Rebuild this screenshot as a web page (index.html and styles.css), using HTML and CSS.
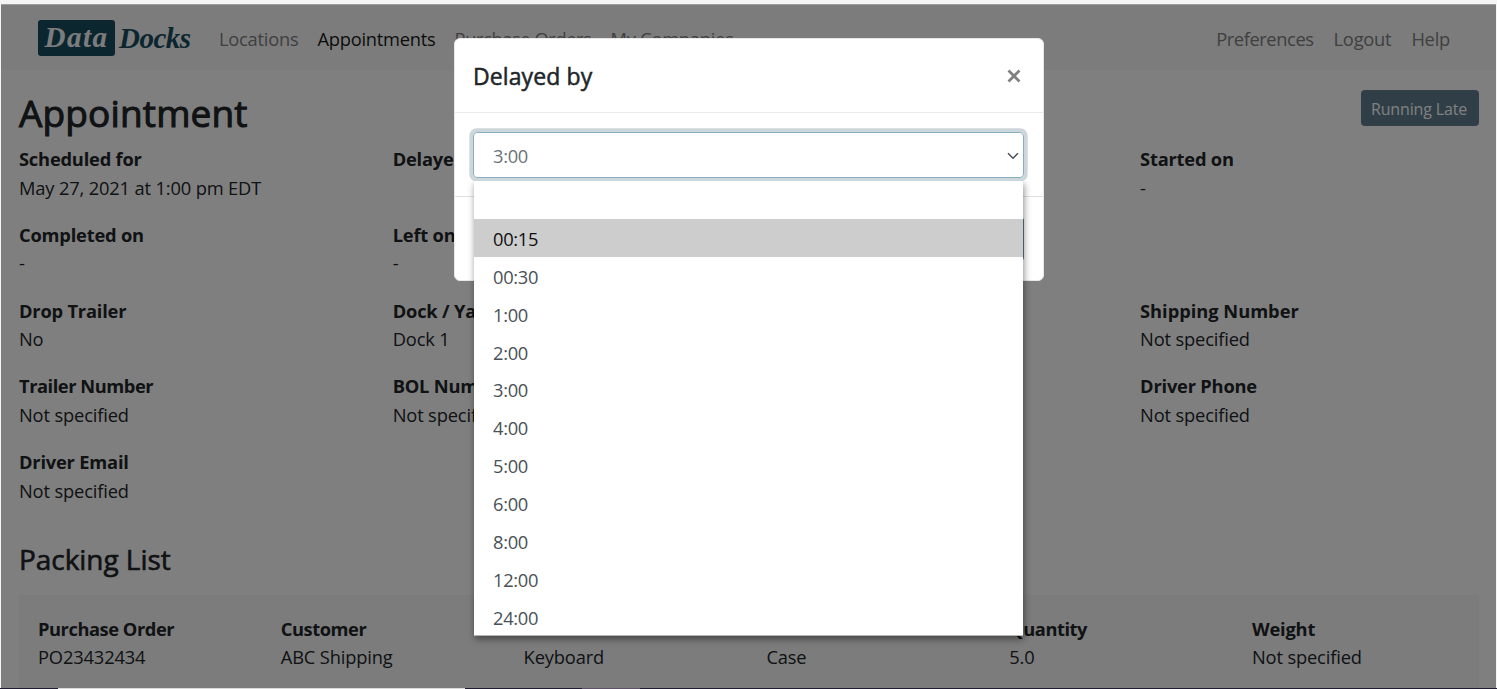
FILE: index.html
```html
<!DOCTYPE html>
<html lang="en">
<head>
<meta charset="utf-8">
<title>Appointment</title>
<link rel="stylesheet" href="styles.css">
</head>
<body>
<div class="page">
  <nav class="navbar">
    <div class="logo"><span class="logo-box">Data</span><span class="logo-rest">Docks</span></div>
    <div class="links">
      <a>Locations</a><a class="active">Appointments</a><a class="tight">Purchase Orders</a><a>My Companies</a>
    </div>
    <div class="links right"><a class="tight">Preferences</a><a>Logout</a><a>Help</a></div>
  </nav>
  <main class="content">
    <div class="title-row"><h1>Appointment</h1><button class="late">Running Late</button></div>
    <div class="details">
      <div class="field"><b>Scheduled for</b><span>May 27, 2021 at 1:00 pm EDT</span></div>
      <div class="field"><b>Delayed by</b></div>
      <div class="field"></div>
      <div class="field"><b>Started on</b><span>-</span></div>
      <div class="field"><b>Completed on</b><span>-</span></div>
      <div class="field"><b>Left on</b><span>-</span></div>
      <div class="field"></div>
      <div class="field"></div>
      <div class="field"><b>Drop Trailer</b><span>No</span></div>
      <div class="field"><b>Dock / Yard</b><span>Dock 1</span></div>
      <div class="field"></div>
      <div class="field"><b class="wide">Shipping Number</b><span>Not specified</span></div>
      <div class="field"><b class="tight">Trailer Number</b><span>Not specified</span></div>
      <div class="field"><b>BOL Number</b><span>Not specified</span></div>
      <div class="field"></div>
      <div class="field"><b>Driver Phone</b><span>Not specified</span></div>
      <div class="field"><b>Driver Email</b><span>Not specified</span></div>
    </div>
    <h2>Packing List</h2>
    <div class="packing">
      <div class="field"><b class="tight">Purchase Order</b><span>PO23432434</span></div>
      <div class="field"><b class="tight">Customer</b><span>ABC Shipping</span></div>
      <div class="field"><b>&nbsp;</b><span>Keyboard</span></div>
      <div class="field"><b>&nbsp;</b><span>Case</span></div>
      <div class="field"><b class="tight">Quantity</b><span>5.0</span></div>
      <div class="field"><b>Weight</b><span>Not specified</span></div>
    </div>
  </main>
  <div class="backdrop"></div>
</div>
<div class="taskbar"><i class="light"></i><i class="violet"></i></div>
<div class="modal">
  <div class="modal-head">
    <h5>Delayed by</h5>
    <svg class="close" width="14" height="14" viewBox="0 0 14 14"><path d="M1.5 1.5 12.5 12.5M12.5 1.5 1.5 12.5" stroke="#7f7f7f" stroke-width="2.7" fill="none"/></svg>
  </div>
  <div class="modal-body">
    <div class="select"><span>3:00</span><svg width="12" height="8" viewBox="0 0 12 8"><path d="M1 1.2 6 6.2 11 1.2" fill="none" stroke="#495057" stroke-width="1.5"/></svg>
      <div class="menu">
        <div></div><div class="hover">00:15</div><div>00:30</div><div>1:00</div><div>2:00</div><div>3:00</div><div>4:00</div><div>5:00</div><div>6:00</div><div>8:00</div><div>12:00</div><div>24:00</div>
      </div>
    </div>
  </div>
  <div class="modal-foot"><div class="save"></div></div>
</div>
</body>
</html>
```
FILE: styles.css
```css
* { box-sizing: border-box; }
body {
  margin: 0;
  height: 689px;
  padding: 4px 1px 0;
  overflow: hidden;
  background: #f5f5f5;
  color: #212529;
  font: 18.3px/28.5px "Open Sans", "Noto Sans", sans-serif;
  letter-spacing: -0.15px;
}
.page {
  position: relative;
  height: 684px;
  overflow: hidden;
  background: #fff;
}
.backdrop {
  position: absolute;
  inset: 0;
  background: rgba(0, 0, 0, 0.5);
  border-top: 1px solid rgba(255, 255, 255, 0.25);
}
.navbar {
  height: 66px;
  padding: 4px 46px 0 37px;
  display: flex;
  align-items: center;
  background: #f8f9fa;
}
.logo {
  display: flex;
  align-items: center;
  width: 153px;
  height: 36px;
  margin-right: 28px;
  margin-top: -2px;
  font: italic bold 29px/34px "Liberation Serif", serif;
  letter-spacing: -0.5px;
  color: #184d60;
  white-space: nowrap;
}
.logo-box {
  flex: none;
  width: 77px;
  height: 36px;
  margin-right: 4px;
  border-radius: 3px;
  text-align: center;
  letter-spacing: 1.5px;
  background: #184d60;
  color: #f8f9fa;
}
.links { display: flex; gap: 19px; color: #7f8080; white-space: nowrap; letter-spacing: -0.23px; }
.links .active { color: #191919; }
.links .tight { letter-spacing: -0.4px; }
.right { margin-left: auto; gap: 20px; }
.content { padding: 0 17px 0 18px; }
.title-row {
  height: 75px;
  display: flex;
  justify-content: space-between;
  align-items: flex-start;
  padding-top: 20px;
}
h1, h2, h5 { margin: 0; font-weight: 400; }
h1 { font-size: 37px; line-height: 45px; letter-spacing: 0.15px; -webkit-text-stroke: 1px #212529; }
.late {
  width: 118px;
  height: 36px;
  padding: 2px 2px 0 0;
  border: 0;
  border-radius: 4px;
  background: #5f7d8e;
  color: #fff;
  font: 16px/24px "Open Sans", sans-serif;
  letter-spacing: -0.15px;
}
.details {
  display: grid;
  grid-template-columns: repeat(4, 373.7px);
  grid-auto-rows: 75.8px;
}
.field b, .field span { display: block; white-space: nowrap; }
.field b { letter-spacing: -0.2px; }
.field .tight { letter-spacing: -0.45px; }
.field .wide { letter-spacing: -0.02px; }
h2 { font-size: 28px; line-height: 34px; margin-top: 18px; letter-spacing: -0.05px; -webkit-text-stroke: 0.6px #212529; }
.packing {
  height: 110px;
  margin-top: 19px;
  padding: 20px 0 0 19px;
  display: grid;
  grid-template-columns: repeat(6, 242.8px);
  background: #f8f9fa;
  overflow: hidden;
}
.taskbar {
  height: 1px;
  margin: 0 -1px;
  padding-left: 58px;
  display: flex;
  gap: 117px;
  background: #211c31;
}
.light { width: 407px; background: #dadada; }
.violet { width: 58px; background: #5d5268; }
.modal {
  position: absolute;
  left: 454px;
  top: 38px;
  width: 590px;
  height: 243px;
  border: 1px solid #e8e8e8;
  background: #fff;
  border-radius: 6px;
}
.modal-head {
  height: 74px;
  padding: 0 22px 0 18px;
  display: flex;
  align-items: center;
  justify-content: space-between;
  border-bottom: 1px solid #ebebee;
}
h5 { font-size: 23px; line-height: 30px; letter-spacing: 0.1px; -webkit-text-stroke: 0.5px #212529; }
.modal-body { height: 84px; padding: 19px 18px; border-bottom: 1px solid #dee2e6; }
.select {
  position: relative;
  height: 46px;
  width: 551px;
  padding: 2px 4px 0 19px;
  display: flex;
  align-items: center;
  justify-content: space-between;
  border: 1px solid #89aec1;
  border-radius: 4px;
  box-shadow: 0 0 0 3.7px #cdd6db;
  color: #6c7278;
  letter-spacing: -0.3px;
}
.menu {
  position: absolute;
  top: 48px;
  left: 0;
  width: 549px;
  height: 455px;
  background: #fff;
  border-bottom: 1px solid #b5b5b5;
  box-shadow: 1px 3px 7px rgba(0, 0, 0, 0.45);
  clip-path: inset(0 -12px -12px -12px);
  color: #495057;
}
.menu div { height: 37.88px; padding: 1px 0 0 19px; line-height: 37px; }
.menu .hover { background: #cdcdcd; color: #101010; }
.modal-foot { padding: 21px 19px; display: flex; justify-content: flex-end; }
.save { width: 70px; height: 42px; border-radius: 2px; background: #5f7d8e; }
```
